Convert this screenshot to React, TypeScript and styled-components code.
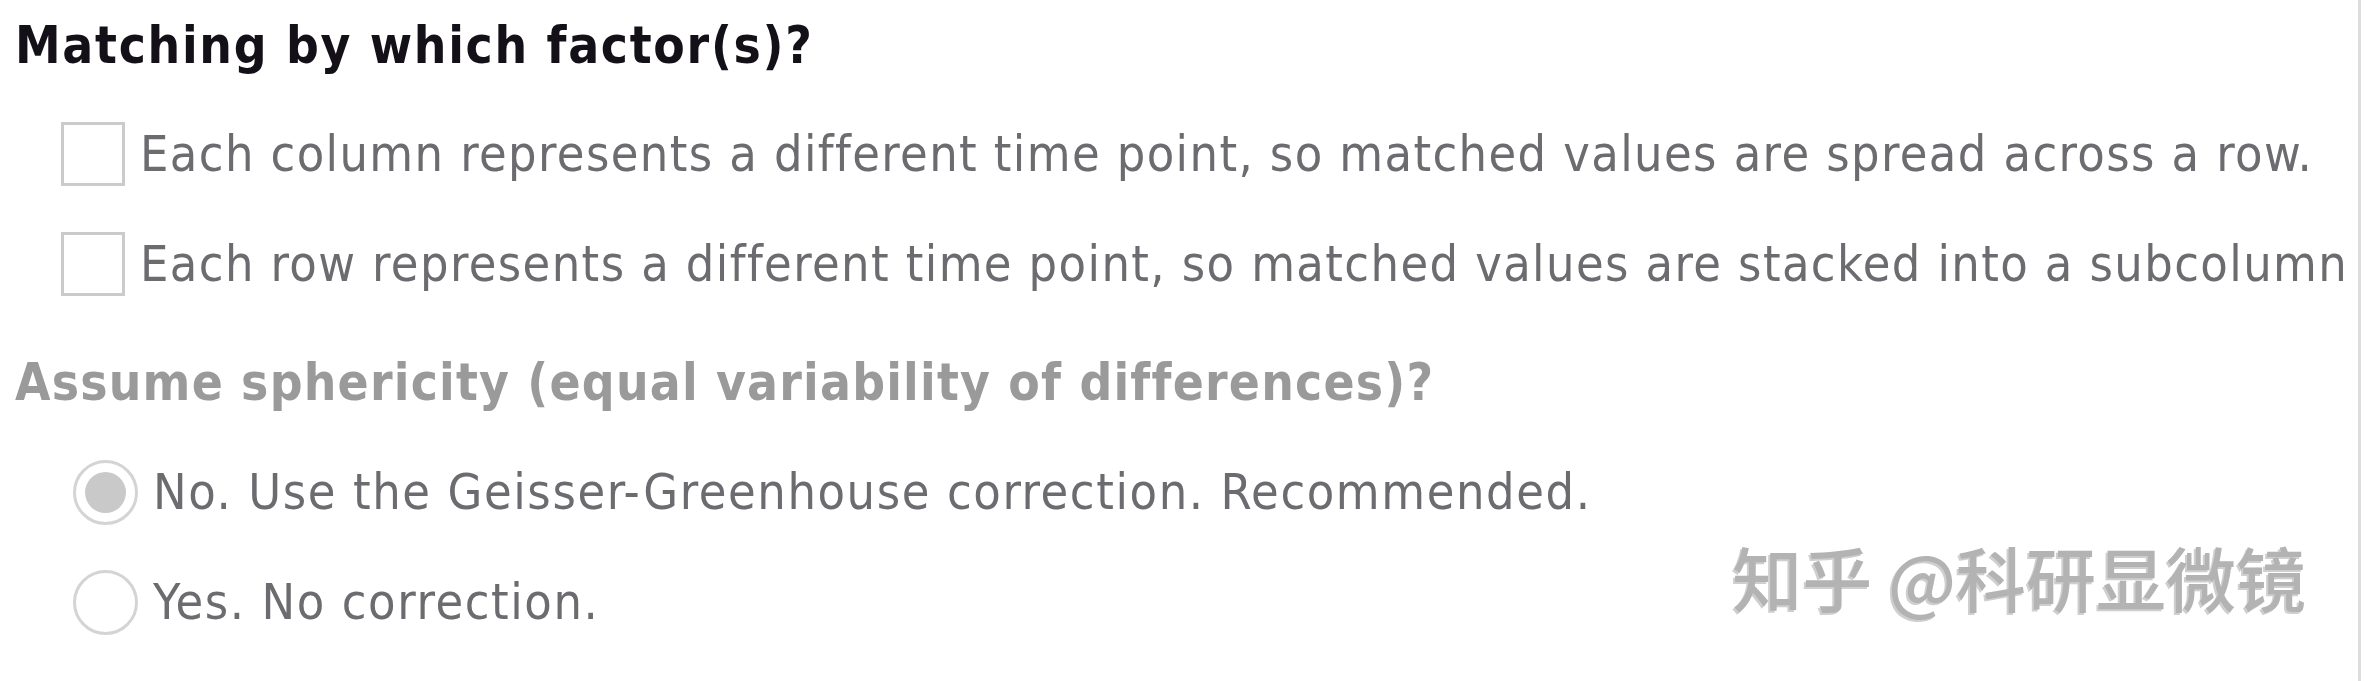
import React from "react";
import styled, { createGlobalStyle } from "styled-components";

const GlobalStyle = createGlobalStyle`
  html, body {
    margin: 0;
    padding: 0;
    background: #ffffff;
  }
`;

const Panel = styled.div`
  position: relative;
  box-sizing: border-box;
  width: 2361px;
  height: 681px;
  padding: 10px 0 0 15px;
  border-right: 3px solid #dcdcdc;
  font-family: "DejaVu Sans Condensed", "DejaVu Sans", sans-serif;
  overflow: hidden;
`;

const SectionTitle = styled.div<{ $muted?: boolean }>`
  font-size: 51px;
  font-weight: bold;
  line-height: 72px;
  letter-spacing: ${({ $muted }) => ($muted ? "1.2px" : "1.7px")};
  color: ${({ $muted }) => ($muted ? "#9a9a9a" : "#141018")};
`;

const OptionList = styled.div<{ $indent: number; $gap: number; $top: number; $bottom: number }>`
  display: flex;
  flex-direction: column;
  gap: ${({ $gap }) => $gap}px;
  padding-left: ${({ $indent }) => $indent}px;
  margin: ${({ $top, $bottom }) => `${$top}px 0 ${$bottom}px`};
`;

const OptionRow = styled.label`
  display: flex;
  align-items: center;
  gap: 15px;
  height: 64px;
`;

const CheckBox = styled.span`
  box-sizing: border-box;
  flex: none;
  width: 64px;
  height: 64px;
  border: 3px solid #cbcbcb;
  background: #ffffff;
`;

const Radio = styled.span<{ $checked?: boolean }>`
  box-sizing: border-box;
  flex: none;
  display: flex;
  align-items: center;
  justify-content: center;
  width: 65px;
  height: 65px;
  border: 3px solid #d4d4d4;
  border-radius: 50%;
  background: #ffffff;

  &::after {
    content: "";
    width: 41px;
    height: 41px;
    border-radius: 50%;
    background: ${({ $checked }) => ($checked ? "#c9c9c9" : "transparent")};
  }
`;

const OptionText = styled.span<{ $spacing?: number }>`
  font-size: 50px;
  letter-spacing: ${({ $spacing = 1.4 }) => $spacing}px;
  color: #6c6c70;
  white-space: nowrap;
`;

const Watermark = styled.div`
  position: absolute;
  right: 52px;
  bottom: 62px;
  font-family: "Noto Sans CJK SC", sans-serif;
  font-size: 70px;
  font-weight: 500;
  line-height: 1.2;
  color: #b3b3b3;
  text-shadow: -2px 2px 0 #cfcfcf;
  white-space: nowrap;
`;

const matchingOptions = [
  "Each column represents a different time point, so matched values are spread across a row.",
  "Each row represents a different time point, so matched values are stacked into a subcolumn",
];

const sphericityOptions = [
  { text: "No. Use the Geisser-Greenhouse correction. Recommended.", checked: true },
  { text: "Yes. No correction.", checked: false },
];

const App = (): JSX.Element => {
  return (
    <Panel>
      <GlobalStyle />
      <SectionTitle>Matching by which factor(s)?</SectionTitle>
      <OptionList $indent={46} $gap={46} $top={40} $bottom={51}>
        {matchingOptions.map((text) => (
          <OptionRow key={text}>
            <CheckBox />
            <OptionText>{text}</OptionText>
          </OptionRow>
        ))}
      </OptionList>
      <SectionTitle $muted>Assume sphericity (equal variability of differences)?</SectionTitle>
      <OptionList $indent={58} $gap={46} $top={41} $bottom={0}>
        {sphericityOptions.map((opt) => (
          <OptionRow key={opt.text}>
            <Radio $checked={opt.checked} />
            <OptionText $spacing={1.6}>{opt.text}</OptionText>
          </OptionRow>
        ))}
      </OptionList>
      <Watermark>知乎 @科研显微镜</Watermark>
    </Panel>
  );
};

export default App;
